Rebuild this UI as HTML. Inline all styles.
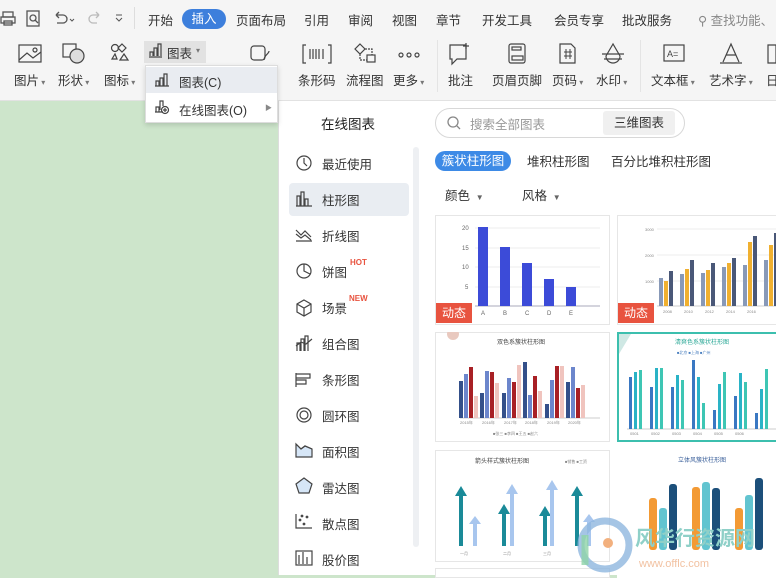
<!DOCTYPE html>
<html><head><meta charset="utf-8"><style>
*{margin:0;padding:0;box-sizing:border-box}
body{width:776px;height:575px;overflow:hidden;position:relative;background:#cde5cb;font-family:"Liberation Sans","Noto Sans CJK SC",sans-serif;font-size:12px;color:#333}
.a{position:absolute;white-space:nowrap}
.top{position:absolute;left:0;top:0;width:776px;height:101px;background:#f5f5f5;border-bottom:1px solid #e2e2e2}
.tab{position:absolute;top:10px;font-size:12.5px;color:#333}
.lbl{position:absolute;top:70px;font-size:12.5px;color:#333}
.panel{position:absolute;left:278px;top:101px;width:498px;height:474px;background:#fff;border-left:1px solid #ddd}
.side{position:absolute;left:322px;font-size:12.5px;color:#333}
.card{position:absolute;background:#fff;border:1px solid #e6e6e6}
.dyn{position:absolute;background:#e8533f;color:#fff;font-size:12px;width:36px;height:20px;line-height:20px;text-align:center}
</style></head><body>
<div class="top"></div>
<div class="a" style="left:144px;top:41px;width:62px;height:22px;background:#e2e2e2"></div>
<svg class="a" style="left:0;top:9px" width="130" height="20" viewBox="0 0 130 20" fill="none" stroke="#555" stroke-width="1.3">
<rect x="3" y="3" width="10" height="5"/><rect x="1" y="8" width="14" height="6"/><rect x="4" y="12" width="8" height="4"/>
<rect x="27" y="2" width="12" height="15"/><circle cx="33" cy="9" r="3"/><path d="M35 11l3 3"/>
<path d="M56 6h7a4 4 0 010 8h-6M56 6l3-3M56 6l3 3"/><path d="M70 10l2 2 2-2" stroke-width="1"/>
<path stroke="#bbb" d="M99 6h-6a4 4 0 000 8h4M99 6l-3-3M99 6l-3 3"/>
<path d="M116 9l3 3 3-3M116 6h6" stroke-width="1"/>
</svg>
<div class="a" style="left:134px;top:7px;width:1px;height:22px;background:#ddd"></div>
<div class="tab" style="left:148px">开始</div>
<div class="a" style="left:182px;top:9px;width:44px;height:20px;background:#3d7fdc;border-radius:10px;color:#fff;font-size:12.5px;text-align:center;line-height:20px">插入</div>
<div class="tab" style="left:236px">页面布局</div>
<div class="tab" style="left:304px">引用</div>
<div class="tab" style="left:348px">审阅</div>
<div class="tab" style="left:392px">视图</div>
<div class="tab" style="left:436px">章节</div>
<div class="tab" style="left:482px">开发工具</div>
<div class="tab" style="left:554px">会员专享</div>
<div class="tab" style="left:622px">批改服务</div>
<div class="tab" style="left:698px;color:#888">⚲ 查找功能、</div>
<svg class="a" style="left:0;top:40px" width="776" height="30" viewBox="0 0 776 30" fill="none" stroke="#444" stroke-width="1.2">
<rect x="19" y="5" width="22" height="17"/><path d="M19 20l8-7 6 5 8-6"/><circle cx="35" cy="10" r="2"/>
<rect x="63" y="4" width="13" height="13"/><circle cx="77" cy="16" r="7" fill="#ddd"/>
<circle cx="115" cy="8" r="3.5"/><path d="M122 4l4 4-4 4-4-4z"/><path d="M115 14l2 5h-5z M120 20l4-6 4 6z"/>
<path d="M150 16v-4h3v4M154 16v-8h3v8M158 16v-12h3v12M149 17h13"/>
<rect x="251" y="6" width="14" height="14" rx="3"/><path d="M264 20c0-5 5-6 5-9"/>
<path d="M306 5h-3v18h3M328 5h3v18h-3M310 9v10M313 9v10M316 9v10M319 9v10M323 9v10"/>
<path d="M360 4l5 5-5 5-5-5z"/><rect x="367" y="15" width="8" height="7"/><path d="M360 14v6h7M365 9h7v6" stroke-dasharray="2 1"/>
<circle cx="401" cy="15" r="2"/><circle cx="409" cy="15" r="2"/><circle cx="417" cy="15" r="2"/>
<path d="M450 5h16v14h-9l-5 5v-5h-2z"/><path d="M466 3v6M463 6h6"/>
<rect x="509" y="4" width="16" height="19" rx="2"/><rect x="512" y="7" width="9" height="3"/><rect x="512" y="16" width="11" height="4"/>
<path d="M560 4h11l4 4v15h-15z"/><path d="M564 12h8M564 16h8M566 9v10M570 9v10" stroke-width="1"/>
<path d="M613 4l-7 12a7 7 0 0014 0z"/><path d="M602 14h22M604 19h18"/>
<rect x="664" y="5" width="20" height="16"/><text x="667" y="17" font-size="9" fill="#444" stroke="none">A=</text>
<path d="M723 22l8-18 8 18M726 15h10M720 23h22"/>
<path d="M768 5h8v18h-8z"/>
</svg>
<div class="a" style="left:167px;top:43px;font-size:12.5px">图表</div>
<div class="a" style="left:196px;top:46px;font-size:8px;color:#777">▾</div>
<div class="lbl" style="left:14px">图片<span style="font-size:8px;color:#777"> ▾</span></div>
<div class="lbl" style="left:58px">形状<span style="font-size:8px;color:#777"> ▾</span></div>
<div class="lbl" style="left:104px">图标<span style="font-size:8px;color:#777"> ▾</span></div>
<div class="lbl" style="left:298px">条形码</div>
<div class="lbl" style="left:346px">流程图</div>
<div class="lbl" style="left:393px">更多<span style="font-size:8px;color:#777"> ▾</span></div>
<div class="lbl" style="left:448px">批注</div>
<div class="lbl" style="left:492px">页眉页脚</div>
<div class="lbl" style="left:552px">页码<span style="font-size:8px;color:#777"> ▾</span></div>
<div class="lbl" style="left:596px">水印<span style="font-size:8px;color:#777"> ▾</span></div>
<div class="lbl" style="left:651px">文本框<span style="font-size:8px;color:#777"> ▾</span></div>
<div class="lbl" style="left:709px">艺术字<span style="font-size:8px;color:#777"> ▾</span></div>
<div class="lbl" style="left:766px">日</div>
<div class="a" style="left:437px;top:40px;width:1px;height:52px;background:#e4e4e4"></div>
<div class="a" style="left:640px;top:40px;width:1px;height:52px;background:#e4e4e4"></div>

<div class="panel"></div>
<div class="a" style="left:321px;top:113px;font-size:13.5px;color:#222">在线图表</div>
<div class="a" style="left:435px;top:108px;width:250px;height:30px;border:1px solid #d8d8d8;border-radius:15px"></div>
<svg class="a" style="left:446px;top:115px" width="16" height="16" fill="none" stroke="#888" stroke-width="1.3"><circle cx="7" cy="7" r="5"/><path d="M11 11l3 3"/></svg>
<div class="a" style="left:470px;top:114px;font-size:12.5px;color:#999">搜索全部图表</div>
<div class="a" style="left:603px;top:111px;width:72px;height:24px;background:#f0f0f0;border-radius:3px;text-align:center;line-height:24px;font-size:12.5px">三维图表</div>

<div class="a" style="left:289px;top:183px;width:120px;height:33px;background:#e9edf2;border-radius:4px"></div>
<div class="a" style="left:413px;top:147px;width:6px;height:400px;background:#eef0f3;border-radius:3px"></div>
<svg class="a" style="left:294px;top:150px" width="22" height="420" fill="none" stroke="#444" stroke-width="1.2">
<circle cx="10" cy="13" r="7"/><path d="M10 8v5l3 3"/>
<path d="M3 56v-10h3v10M7 56v-14h3v14M11 56v-7h3v7M2 56h16"/>
<path d="M2 80l5 5 4-4 6 6M2 84l5 4 4-3 6 5M2 91h16"/>
<circle cx="10" cy="121" r="7"/><path d="M10 114v7l6 3"/>
<path d="M10 150l7 4v8l-7 4-7-4v-8z M3 154l7 4 7-4M10 158v8"/>
<path d="M3 201v-8h3v8M7 201v-12h3v12M11 201v-15h3v15M2 196l5-4 5 2 6-5"/>
<path d="M2 223v14M2 224h14v4H2M2 230h10v4H2"/>
<circle cx="10" cy="265" r="7"/><circle cx="10" cy="265" r="4"/>
<path d="M2 294l5 5 4-3 7 3v8H2z" fill="#d6e6f7"/><path d="M2 294l5 5 4-3 7 3"/>
<path d="M10 328l8 6-3 9H5l-3-9z" fill="#d6e6f7"/>
<path d="M2 364v14h16" /><circle cx="6" cy="370" r=".8"/><circle cx="10" cy="374" r=".8"/><circle cx="13" cy="367" r=".8"/><circle cx="8" cy="366" r=".8"/>
<rect x="2" y="401" width="16" height="14"/><path d="M5 414v-9M9 414v-12M13 414v-7"/>
</svg>
<div class="side" style="top:154px">最近使用</div>
<div class="side" style="top:190px">柱形图</div>
<div class="side" style="top:226px">折线图</div>
<div class="side" style="top:262px">饼图</div>
<div class="a" style="left:350px;top:258px;font-size:8px;color:#e8533f;font-weight:bold">HOT</div>
<div class="side" style="top:298px">场景</div>
<div class="a" style="left:349px;top:294px;font-size:8px;color:#e8533f;font-weight:bold">NEW</div>
<div class="side" style="top:334px">组合图</div>
<div class="side" style="top:370px">条形图</div>
<div class="side" style="top:406px">圆环图</div>
<div class="side" style="top:442px">面积图</div>
<div class="side" style="top:478px">雷达图</div>
<div class="side" style="top:514px">散点图</div>
<div class="side" style="top:550px">股价图</div>

<div class="a" style="left:435px;top:151px;width:76px;height:20px;background:#3d8ae6;border-radius:10px;color:#fff;text-align:center;line-height:20px;font-size:12.5px">簇状柱形图</div>
<div class="a" style="left:527px;top:151px;font-size:12.5px">堆积柱形图</div>
<div class="a" style="left:611px;top:151px;font-size:12.5px">百分比堆积柱形图</div>
<div class="a" style="left:445px;top:185px;font-size:12.5px">颜色 <span style="font-size:8px;color:#666">&nbsp;▼</span></div>
<div class="a" style="left:522px;top:185px;font-size:12.5px">风格 <span style="font-size:8px;color:#666">&nbsp;▼</span></div>

<div class="card" style="left:435px;top:215px;width:175px;height:110px"></div>
<svg class="a" style="left:435px;top:215px" width="175" height="110" font-size="6" fill="#666">
<g stroke="#eee"><path d="M40 13h125M40 33h125M40 52h125M40 72h125"/></g>
<path d="M40 91h125" stroke="#aab"/>
<text x="27" y="15">20</text><text x="27" y="35">15</text><text x="27" y="54">10</text><text x="30" y="74">5</text>
<g fill="#3c4bd8"><rect x="43" y="12" width="10" height="79"/><rect x="65" y="32" width="10" height="59"/><rect x="87" y="48" width="10" height="43"/><rect x="109" y="64" width="10" height="27"/><rect x="131" y="72" width="10" height="19"/></g>
<text x="46" y="100">A</text><text x="68" y="100">B</text><text x="90" y="100">C</text><text x="112" y="100">D</text><text x="134" y="100">E</text>
</svg>
<div class="dyn" style="left:436px;top:303px">动态</div>
<div class="card" style="left:617px;top:215px;width:170px;height:110px"></div>
<svg class="a" style="left:617px;top:215px" width="160" height="110" font-size="4" fill="#888">
<g stroke="#eee"><path d="M40 14h120M40 40h120M40 66h120"/></g><path d="M40 91h120" stroke="#ccc"/>
<text x="28" y="16">3000</text><text x="28" y="42">2000</text><text x="28" y="68">1000</text>
<g transform="translate(42,0)">
<rect x="0" y="63" width="4" height="28" fill="#8899b8"/><rect x="5" y="66" width="4" height="25" fill="#f0b030"/><rect x="10" y="56" width="4" height="35" fill="#4a5878"/>
<rect x="21" y="59" width="4" height="32" fill="#8899b8"/><rect x="26" y="54" width="4" height="37" fill="#f0b030"/><rect x="31" y="45" width="4" height="46" fill="#4a5878"/>
<rect x="42" y="58" width="4" height="33" fill="#8899b8"/><rect x="47" y="55" width="4" height="36" fill="#f0b030"/><rect x="52" y="48" width="4" height="43" fill="#4a5878"/>
<rect x="63" y="52" width="4" height="39" fill="#8899b8"/><rect x="68" y="48" width="4" height="43" fill="#f0b030"/><rect x="73" y="43" width="4" height="48" fill="#4a5878"/>
<rect x="84" y="50" width="4" height="41" fill="#8899b8"/><rect x="89" y="27" width="4" height="64" fill="#f0b030"/><rect x="94" y="21" width="4" height="70" fill="#4a5878"/>
<rect x="105" y="45" width="4" height="46" fill="#8899b8"/><rect x="110" y="30" width="4" height="61" fill="#f0b030"/><rect x="115" y="18" width="4" height="73" fill="#4a5878"/>
</g>
<text x="46" y="98">2008</text><text x="67" y="98">2010</text><text x="88" y="98">2012</text><text x="109" y="98">2014</text><text x="130" y="98">2016</text>
</svg>
<div class="dyn" style="left:618px;top:303px">动态</div>
<div class="card" style="left:435px;top:332px;width:175px;height:110px"></div>
<svg class="a" style="left:435px;top:332px" width="175" height="110" font-size="4" fill="#888">
<circle cx="18" cy="2" r="6" fill="#e9c9bf"/>
<text x="62" y="12" font-size="6" fill="#444">双色系簇状柱形图</text>
<path d="M25 86h140" stroke="#ccc"/>
<g fill="#34508a"><rect x="24" y="49" width="4" height="37"/><rect x="45" y="61" width="4" height="25"/><rect x="67" y="61" width="4" height="25"/><rect x="88" y="30" width="4" height="56"/><rect x="110" y="72" width="4" height="14"/><rect x="131" y="50" width="4" height="36"/></g>
<g fill="#6c86cc"><rect x="29" y="42" width="4" height="44"/><rect x="50" y="39" width="4" height="47"/><rect x="72" y="46" width="4" height="40"/><rect x="93" y="63" width="4" height="23"/><rect x="115" y="48" width="4" height="38"/><rect x="136" y="35" width="4" height="51"/></g>
<g fill="#a82025"><rect x="34" y="35" width="4" height="51"/><rect x="55" y="40" width="4" height="46"/><rect x="77" y="50" width="4" height="36"/><rect x="98" y="44" width="4" height="42"/><rect x="120" y="34" width="4" height="52"/><rect x="141" y="56" width="4" height="30"/></g>
<g fill="#f0c4be"><rect x="39" y="64" width="4" height="22"/><rect x="60" y="51" width="4" height="35"/><rect x="82" y="33" width="4" height="53"/><rect x="103" y="59" width="4" height="27"/><rect x="125" y="34" width="4" height="52"/><rect x="146" y="53" width="4" height="33"/></g>
<text x="25" y="92">2015年</text><text x="47" y="92">2016年</text><text x="69" y="92">2017年</text><text x="90" y="92">2018年</text><text x="112" y="92">2019年</text><text x="133" y="92">2020年</text>
<text x="58" y="103">■张三 ■李四 ■王五 ■赵六</text>
</svg>
<div class="card" style="left:617px;top:332px;width:170px;height:110px;border:2px solid #3cbfae"></div>
<svg class="a" style="left:617px;top:332px" width="160" height="110" font-size="4" fill="#888">
<path d="M2 2l12 0-12 20z" fill="#cfe8e4"/>
<text x="58" y="12" font-size="6" fill="#2aa896">清爽色系簇状柱形图</text>
<text x="60" y="22" fill="#4a7fbf">■北京 ■上海 ■广州</text>
<path d="M10 97h150" stroke="#ccc"/>
<g fill="#3a78c2"><rect x="12" y="45" width="3" height="52"/><rect x="33" y="55" width="3" height="42"/><rect x="54" y="55" width="3" height="42"/><rect x="75" y="28" width="3" height="69"/><rect x="96" y="78" width="3" height="19"/><rect x="117" y="64" width="3" height="33"/><rect x="138" y="81" width="3" height="16"/></g>
<g fill="#2ab3c6"><rect x="17" y="40" width="3" height="57"/><rect x="38" y="36" width="3" height="61"/><rect x="59" y="43" width="3" height="54"/><rect x="80" y="45" width="3" height="52"/><rect x="101" y="52" width="3" height="45"/><rect x="122" y="41" width="3" height="56"/><rect x="143" y="57" width="3" height="40"/></g>
<g fill="#3ec6b4"><rect x="22" y="38" width="3" height="59"/><rect x="43" y="36" width="3" height="61"/><rect x="64" y="48" width="3" height="49"/><rect x="85" y="71" width="3" height="26"/><rect x="106" y="40" width="3" height="57"/><rect x="127" y="50" width="3" height="47"/><rect x="148" y="37" width="3" height="60"/></g>
<text x="13" y="103">0501</text><text x="34" y="103">0502</text><text x="55" y="103">0503</text><text x="76" y="103">0504</text><text x="97" y="103">0505</text><text x="118" y="103">0506</text>
</svg>
<div class="card" style="left:435px;top:450px;width:175px;height:112px"></div>
<svg class="a" style="left:435px;top:450px" width="175" height="112" font-size="4" fill="#888">
<text x="40" y="13" font-size="6" fill="#444">箭头样式簇状柱形图</text>
<text x="130" y="13">■销售 ■工资</text>
<g fill="#1a8a98"><path d="M24 96v-50h-4l6-10 6 10h-4v50z"/><path d="M67 96v-32h-4l6-10 6 10h-4v32z"/><path d="M108 96v-30h-4l6-10 6 10h-4v30z"/><path d="M140 96v-50h-4l6-10 6 10h-4v50z"/></g>
<g fill="#a8c6ee"><path d="M38 96v-22h-4l6-8 6 8h-4v22z"/><path d="M75 96v-52h-4l6-10 6 10h-4v52z"/><path d="M115 96v-56h-4l6-10 6 10h-4v56z"/><path d="M152 96v-24h-4l6-8 6 8h-4v24z"/></g>
<text x="25" y="105">一月</text><text x="68" y="105">二月</text><text x="108" y="105">三月</text>
</svg>
<div class="card" style="left:617px;top:450px;width:170px;height:112px;border-color:#fff"></div>
<svg class="a" style="left:617px;top:450px" width="160" height="112" font-size="4" fill="#888">
<text x="61" y="12" font-size="6" fill="#3a5f9a">立体风簇状柱形图</text>
<g><rect x="32" y="48" width="8" height="52" rx="3" fill="#f39a34"/><rect x="42" y="58" width="8" height="42" rx="3" fill="#62c4d0"/><rect x="52" y="34" width="8" height="66" rx="3" fill="#1c4f7a"/>
<rect x="75" y="37" width="8" height="63" rx="3" fill="#f39a34"/><rect x="85" y="32" width="8" height="68" rx="3" fill="#62c4d0"/><rect x="95" y="38" width="8" height="62" rx="3" fill="#1c4f7a"/>
<rect x="118" y="58" width="8" height="42" rx="3" fill="#f39a34"/><rect x="128" y="45" width="8" height="55" rx="3" fill="#62c4d0"/><rect x="138" y="28" width="8" height="72" rx="3" fill="#1c4f7a"/></g>
</svg>
<div class="card" style="left:435px;top:568px;width:175px;height:10px"></div>
<div class="card" style="left:617px;top:568px;width:170px;height:10px;border-color:#fff"></div>
<svg class="a" style="left:575px;top:515px" width="201" height="60">
<circle cx="30" cy="30" r="24" fill="none" stroke="#8fb7df" stroke-width="7" opacity=".8"/>
<path d="M10 50v-30" stroke="#8fd4a8" stroke-width="7" opacity=".8"/>
<circle cx="33" cy="28" r="5" fill="#f2b07e"/>
<text x="60" y="30" font-size="20" fill="#8fd0c8" font-weight="bold" font-family="Noto Sans CJK SC">风华行资源网</text>
<text x="64" y="52" font-size="11" fill="#f2c2a2">www.offlc.com</text>
</svg>

<div class="a" style="left:145px;top:65px;width:133px;height:58px;background:#fff;border:1px solid #ddd;box-shadow:0 2px 5px rgba(0,0,0,.15)"></div>
<div class="a" style="left:146px;top:67px;width:131px;height:26px;background:#e9ecf1"></div>
<svg class="a" style="left:154px;top:72px" width="16" height="44" fill="none" stroke="#444" stroke-width="1.2"><path d="M2 14v-5h3v5M6 14v-8h3v8M10 14v-12h3v12M1 14h14"/><path d="M2 40v-5h3v5M6 38v-9h3v5M1 40h8"/><circle cx="11" cy="38" r="3.5"/><path d="M11 36v4M9 38h4"/></svg>
<div class="a" style="left:179px;top:72px;font-size:12.5px">图表(C)</div>
<div class="a" style="left:179px;top:100px;font-size:12.5px">在线图表(O)</div>
<div class="a" style="left:265px;top:103px;font-size:7px;color:#888">▶</div>
</body></html>
